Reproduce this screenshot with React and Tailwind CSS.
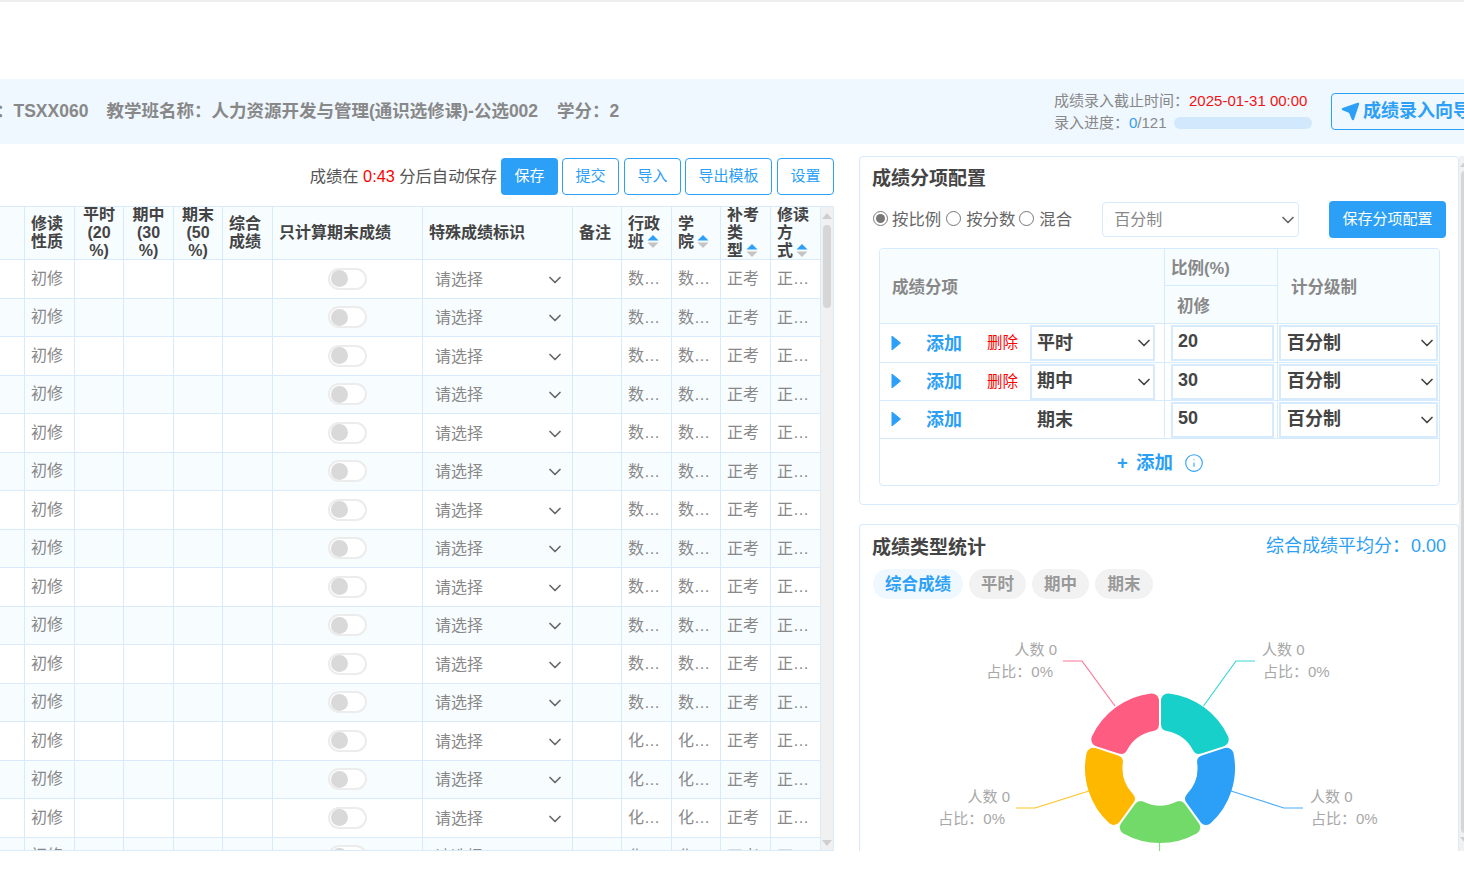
import React from 'react';
import { ChevronDown, Info, Send } from 'lucide-react';

const COLS = 'grid grid-cols-[25px_50px_49px_50px_49px_50px_150px_150px_49px_50px_49px_50px_50px]';

const rows = Array.from({ length: 16 }, (_, i) => (i < 12 ? '数学院' : '化学院'));

const cell = 'border-r border-b border-[#d9ebfb] min-w-0';

function SortIcon() {
  return (
    <svg viewBox="0 0 12 15" className="inline-block w-3 h-[15px] ml-[3px] align-[-2px]">
      <path d="M6 1 L11.5 6.5 H0.5 Z" fill="#2ca0f7" />
      <path d="M0.5 8.5 H11.5 L6 14 Z" fill="#c4c4c4" />
    </svg>
  );
}

function HeadCell({ lines, center, sort }) {
  return (
    <div className={`${cell} flex items-center overflow-hidden px-[6px] ${center ? 'justify-center text-center' : ''}`}>
      <div className="leading-[18px]">
        {lines.map((t, i) => (
          <div key={i} className="whitespace-nowrap">
            {t}
            {sort && i === lines.length - 1 && <SortIcon />}
          </div>
        ))}
      </div>
    </div>
  );
}

function Toggle() {
  return (
    <div className="w-[39px] h-[22px] rounded-full border-2 border-[#ececec] bg-white flex items-center pl-px">
      <div className="w-[17px] h-[17px] rounded-full bg-[#d9d9d9]" />
    </div>
  );
}

function Select({ children, className = '', wrapClass = '', color = 'text-[#666]' }) {
  return (
    <div className={`relative ${wrapClass}`}>
      <select className={`appearance-none w-full h-full bg-transparent outline-none ${className}`}>
        <option>{children}</option>
      </select>
      <ChevronDown size={20} strokeWidth={2} className={`absolute right-px top-1/2 -translate-y-1/2 pointer-events-none ${color}`} />
    </div>
  );
}

function Row({ college, index }) {
  const bg = index % 2 === 1 ? 'bg-[#f7fcff]' : 'bg-white';
  const text = 'truncate px-[6px] text-[#888]';
  return (
    <div className={`${COLS} h-[38.5px] ${bg} text-[16px]`}>
      <div className={cell} />
      <div className={`${cell} flex items-center ${text}`}>初修</div>
      <div className={cell} />
      <div className={cell} />
      <div className={cell} />
      <div className={cell} />
      <div className={`${cell} flex items-center justify-center`}>
        <Toggle />
      </div>
      <div className={`${cell} flex items-center pl-1 pr-[6px] pt-0.5`}>
        <Select wrapClass="w-full h-[30px]" className="pl-2 text-[#888]">请选择</Select>
      </div>
      <div className={cell} />
      <div className={`${cell} leading-[38px] ${text}`}>{college}</div>
      <div className={`${cell} leading-[38px] ${text}`}>{college}</div>
      <div className={`${cell} leading-[38px] ${text}`}>正考</div>
      <div className={`${cell} leading-[38px] ${text}`}>正常修读</div>
    </div>
  );
}

function OutlineButton({ children, className = '' }) {
  return (
    <button className={`h-[37px] rounded-[4px] border border-[#2ca0f7] bg-white text-[#2ca0f7] text-[15px] ${className}`}>
      {children}
    </button>
  );
}

function ScoreTable() {
  return (
    <div className="flex w-[834px] h-[645px] border-t border-b border-r border-[#d9ebfb]">
      <div className="w-[821px] shrink-0 overflow-hidden">
        <div className={`${COLS} h-[53px] bg-[#f7fcff] text-[16px] font-bold text-[#444]`}>
          <div className={cell} />
          <HeadCell lines={['修读', '性质']} />
          <HeadCell lines={['平时', '(20', '%)']} center />
          <HeadCell lines={['期中', '(30', '%)']} center />
          <HeadCell lines={['期末', '(50', '%)']} center />
          <HeadCell lines={['综合', '成绩']} />
          <HeadCell lines={['只计算期末成绩']} />
          <HeadCell lines={['特殊成绩标识']} />
          <HeadCell lines={['备注']} />
          <HeadCell lines={['行政', '班']} sort />
          <HeadCell lines={['学', '院']} sort />
          <HeadCell lines={['补考', '类', '型']} sort />
          <HeadCell lines={['修读', '方', '式']} sort />
        </div>
        {rows.map((college, i) => (
          <Row key={i} college={college} index={i} />
        ))}
      </div>
      <div className="w-[12px] bg-[#f1f1f1] flex flex-col items-center justify-between pt-1 pb-1">
        <div className="flex flex-col items-center gap-1 w-full">
          <svg viewBox="0 0 10 6" className="w-2.5 h-1.5 mt-0.5"><path d="M5 0 L10 6 H0 Z" fill="#cfcfcf" /></svg>
          <div className="w-2 h-[83px] rounded bg-[#d6d6d6] mt-0.5" />
        </div>
        <svg viewBox="0 0 10 6" className="w-2.5 h-1.5"><path d="M0 0 H10 L5 6 Z" fill="#cfcfcf" /></svg>
      </div>
    </div>
  );
}

function ConfigRow({ name, value, editable, h }) {
  return (
    <div className={`grid grid-cols-[285px_113px_1fr] ${h} border-b border-[#d6ebfd]`}>
      <div className="flex items-center border-r border-[#d6ebfd]">
        <svg viewBox="0 0 10 16" className="w-2.5 h-4 ml-[11px] mb-px">
          <path d="M1 1 L9.5 8 L1 15 Z" fill="#2ca0f7" stroke="#2ca0f7" strokeLinejoin="round" />
        </svg>
        <span className="ml-[25px] mt-[2px] w-[61px] text-[18px] font-bold text-[#2ca0f7]">添加</span>
        <span className="w-[43px] text-[15.5px] text-[#f00]">{editable ? '删除' : ''}</span>
        {editable ? (
          <Select wrapClass="w-[125px] h-[36px]" className="pl-[5px] border-2 border-[#d6ebfd] text-[18px] font-bold text-[#444]" color="text-[#444]">
            {name}
          </Select>
        ) : (
          <span className="pl-[7px] mt-[2px] text-[18px] font-bold text-[#444]">{name}</span>
        )}
      </div>
      <div className="flex items-center pl-[6px] border-r border-[#d6ebfd]">
        <div className="w-[103px] h-[36px] border-2 border-[#d6ebfd] pl-[5px] leading-[28px] text-[18px] font-bold text-[#444]">{value}</div>
      </div>
      <div className="flex items-center pl-px">
        <Select wrapClass="w-[159px] h-[36px]" className="pl-[6px] border-2 border-[#d6ebfd] text-[18px] font-bold text-[#444]" color="text-[#444]">
          百分制
        </Select>
      </div>
    </div>
  );
}

function ConfigPanel() {
  return (
    <div className="h-[349px] border border-[#d6ebfd] rounded-[4px] pl-[12px] pt-[8px]">
      <h2 className="text-[19px] leading-[28px] font-bold text-[#444]">成绩分项配置</h2>
      <div className="flex items-center h-[37px] mt-[8px] ml-px text-[16.4px] text-[#666]">
        <input type="radio" name="mode" defaultChecked className="w-[15px] h-[15px] m-0 mb-[3px] accent-[#777]" />
        <span className="ml-[4px] mr-[5px]">按比例</span>
        <input type="radio" name="mode" className="w-[15px] h-[15px] m-0 mb-[3px]" />
        <span className="ml-[5px] mr-[4px]">按分数</span>
        <input type="radio" name="mode" className="w-[15px] h-[15px] m-0 mb-[3px]" />
        <span className="ml-[5px]">混合</span>
        <Select wrapClass="ml-[30px] w-[197px] h-[35px]" className="pl-[11px] border border-[#d6ebfd] rounded-[4px] text-[16px] text-[#888]">
          百分制
        </Select>
        <button className="ml-[30px] w-[117px] h-[37px] rounded-[4px] bg-[#2ca0f7] text-white text-[15px]">保存分项配置</button>
      </div>
      <div className="w-[561px] h-[238px] ml-[7px] mt-[10px] border border-[#d6ebfd] rounded-[4px] overflow-hidden">
        <div className="grid grid-cols-[285px_113px_1fr] h-[75px] bg-[#f7fcff] border-b border-[#d6ebfd] text-[16.5px] font-bold text-[#888]">
          <div className="flex items-center pl-3 pt-0.5 border-r border-[#d6ebfd]">成绩分项</div>
          <div className="border-r border-[#d6ebfd] flex flex-col">
            <div className="h-[37px] leading-[38px] pl-[6px] border-b border-[#d6ebfd]">比例(%)</div>
            <div className="flex-1 flex items-center pl-[12px] pt-[3px]">初修</div>
          </div>
          <div className="flex items-center pl-[13px] pt-0.5">计分级制</div>
        </div>
        <ConfigRow name="平时" value="20" editable h="h-[39px]" />
        <ConfigRow name="期中" value="30" editable h="h-[38px]" />
        <ConfigRow name="期末" value="50" h="h-[38px]" />
        <div className="flex items-center justify-center h-[47px] pl-[2px] text-[18.5px] font-bold text-[#2ca0f7]">
          <span>+</span>
          <span className="ml-[8px]">添加</span>
          <Info size={20} strokeWidth={1.3} className="ml-[11px]" />
        </div>
      </div>
    </div>
  );
}

// donut sectors, clockwise from the top, in the chart's own coordinates
const CX = 300;
const CY = 158;
const segments = [
  { color: '#17d0c9', from: 0, line: '343.5,96 376,51 395,51' },
  { color: '#2ca0f7', from: 72, line: '371,181 424,198 443,198' },
  { color: '#71da68', from: 144, line: '299.5,232 299.5,245' },
  { color: '#ffb800', from: 216, line: '229,181 175,198 156,198' },
  { color: '#ff5c82', from: 288, line: '255,96 222,51 203,51' },
];

function sectorPath(from) {
  const inset = 8;
  const rOuter = 68;
  const rInner = 44.5;
  const rad = (d) => (d * Math.PI) / 180;
  const pt = (r, a) => [CX + r * Math.sin(a), CY - r * Math.cos(a)];
  const a0 = rad(from);
  const a1 = rad(from + 72);
  const [x1, y1] = pt(rOuter, a0 + Math.asin(inset / rOuter));
  const [x2, y2] = pt(rOuter, a1 - Math.asin(inset / rOuter));
  const [x3, y3] = pt(rInner, a1 - Math.asin(inset / rInner));
  const [x4, y4] = pt(rInner, a0 + Math.asin(inset / rInner));
  return `M${x1} ${y1} A${rOuter} ${rOuter} 0 0 1 ${x2} ${y2} L${x3} ${y3} A${rInner} ${rInner} 0 0 0 ${x4} ${y4} Z`;
}

const labels = [
  { x: 197, y: 45, x2: 193, anchor: 'end' },
  { x: 402, y: 45, x2: 403, anchor: 'start' },
  { x: 450, y: 192, x2: 451, anchor: 'start' },
  { x: 150, y: 192, x2: 145, anchor: 'end' },
];

function Donut() {
  return (
    <svg viewBox="0 0 600 260" className="block w-[600px] h-[260px] -ml-[12px]">
      {segments.map((s) => (
        <g key={s.from}>
          <polyline points={s.line} fill="none" stroke={s.color} strokeWidth="1.2" opacity="0.85" />
          <path d={sectorPath(s.from)} fill={s.color} stroke={s.color} strokeWidth="14" strokeLinejoin="round" />
        </g>
      ))}
      {labels.map((l, i) => (
        <g key={i} fontSize="15" fill="#a8a8a8" textAnchor={l.anchor}>
          <text x={l.x} y={l.y}>人数 0</text>
          <text x={l.x2} y={l.y + 22}>占比：0%</text>
        </g>
      ))}
    </svg>
  );
}

function StatsPanel() {
  const chip = 'h-[30px] rounded-full bg-[#f2f2f2] text-[#999] text-[16.5px] font-bold leading-[30px] text-center';
  return (
    <div className="mt-[19px] h-[400px] border border-[#d6ebfd] border-b-0 rounded-t-[4px] pl-[12px] pt-[9px]">
      <div className="flex items-start justify-between pr-[12px]">
        <h2 className="text-[19px] leading-[28px] font-bold text-[#444]">成绩类型统计</h2>
        <div className="text-[18px] leading-[24px] text-[#2ca0f7]">
          综合成绩平均分：<span className="ml-px">0.00</span>
        </div>
      </div>
      <div className="flex gap-[6px] mt-[7px] ml-px">
        <div className={`${chip} w-[90px] !bg-[#eff8ff] !text-[#2ca0f7]`}>综合成绩</div>
        <div className={`${chip} w-[57px]`}>平时</div>
        <div className={`${chip} w-[57px]`}>期中</div>
        <div className={`${chip} w-[58px]`}>期末</div>
      </div>
      <div className="mt-[11px]">
        <Donut />
      </div>
    </div>
  );
}

function App() {
  return (
    <div className="w-[1464px] h-[870px] overflow-hidden bg-white font-['Liberation_Sans','Noto_Sans_CJK_SC',sans-serif]">
      <div className="h-[79px] border-t-2 border-[#eeeeee]" />

      <div className="flex items-center h-[65px] bg-[#eff7ff] whitespace-nowrap">
        <div className="flex-1 -ml-1 text-[17.5px] font-bold text-[#888]">
          <span>：TSXX060</span>
          <span className="ml-[18px]">教学班名称：人力资源开发与管理(通识选修课)-公选002</span>
          <span className="ml-[19px]">学分：2</span>
        </div>
        <div className="w-[277px] text-[15px] leading-[22px] text-[#888]">
          <div>
            成绩录入截止时间：<span className="text-[#f01414]">2025-01-31 00:00</span>
          </div>
          <div className="flex items-center">
            录入进度：<span className="text-[#2ca0f7]">0</span>/121
            <div className="ml-[7px] w-[138px] h-[12px] rounded-full bg-[#d2e9fd]" />
          </div>
        </div>
        <div className="w-[133px] overflow-hidden">
          <button className="flex items-center w-[160px] h-[37px] pl-[9px] rounded-[4px] border border-[#2ca0f7] text-[18px] font-bold text-[#2ca0f7]">
            <Send size={19} fill="#2ca0f7" strokeWidth={2} className="mr-[3px] shrink-0" />
            成绩录入向导
          </button>
        </div>
      </div>

      <div className="flex h-[707px] overflow-hidden">
        <div className="w-[834px] shrink-0 pt-[14px]">
          <div className="flex items-center justify-end h-[37px] mb-[11px]">
            <span className="mr-[4px] text-[16.3px] text-[#555]">
              成绩在 <span className="text-[#f00]">0:43</span> 分后自动保存
            </span>
            <button className="w-[57px] h-[37px] rounded-[4px] bg-[#2ca0f7] text-white text-[15px]">保存</button>
            <OutlineButton className="w-[57px] ml-[4px]">提交</OutlineButton>
            <OutlineButton className="w-[57px] ml-[5px]">导入</OutlineButton>
            <OutlineButton className="w-[87px] ml-[4px]">导出模板</OutlineButton>
            <OutlineButton className="w-[57px] ml-[5px]">设置</OutlineButton>
          </div>
          <ScoreTable />
        </div>

        <div className="flex ml-[25px] mt-[12px]">
          <div className="w-[600px] shrink-0">
            <ConfigPanel />
            <StatsPanel />
          </div>
          <div className="w-[5px] overflow-hidden bg-[#f1f1f1] shrink-0 pl-[2px] pt-[5px] flex flex-col justify-between pb-[8px]">
            <svg viewBox="0 0 10 6" className="w-2.5 h-1.5 max-w-none -ml-[1px] shrink-0"><path d="M5 0 L10 6 H0 Z" fill="#cfcfcf" /></svg>
            <div className="w-2 flex-1 my-1 rounded bg-[#d6d6d6]" />
            <svg viewBox="0 0 10 6" className="w-2.5 h-1.5 max-w-none -ml-[1px] shrink-0"><path d="M0 0 H10 L5 6 Z" fill="#cfcfcf" /></svg>
          </div>
        </div>
      </div>
    </div>
  );
}

export default App;
